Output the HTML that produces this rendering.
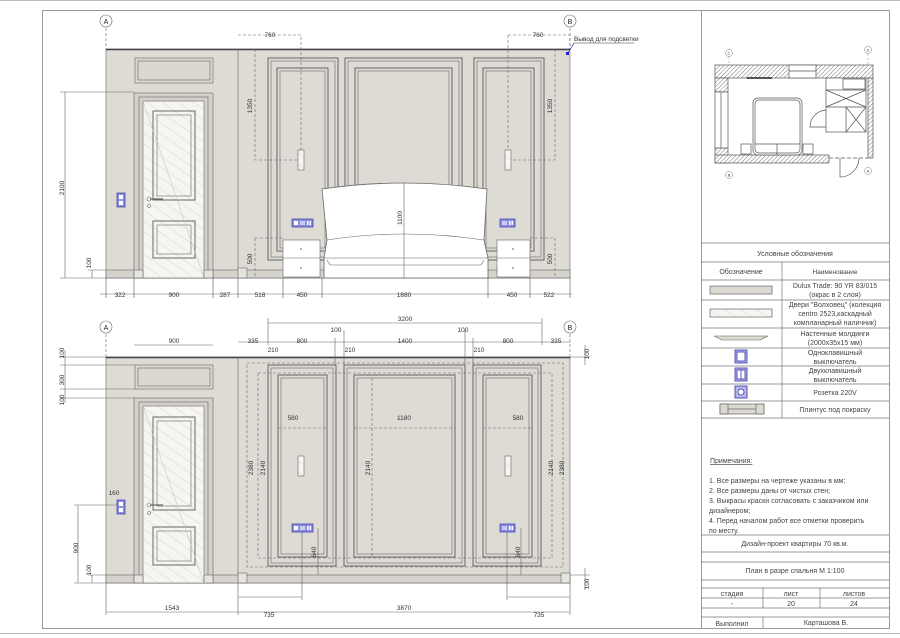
<!DOCTYPE html>
<html><head><meta charset="utf-8"><style>
html,body{margin:0;padding:0;background:#fff;}
svg{display:block;font-family:"Liberation Sans",sans-serif;}
</style></head><body>
<svg width="900" height="638" viewBox="0 0 900 638" xmlns="http://www.w3.org/2000/svg">
<defs>
<pattern id="h" width="3" height="3" patternUnits="userSpaceOnUse" patternTransform="rotate(45)"><rect width="3" height="3" fill="#fff"/><line x1="0" y1="0" x2="0" y2="3" stroke="#777" stroke-width="1"/></pattern>
<pattern id="dh" width="9" height="9" patternUnits="userSpaceOnUse" patternTransform="rotate(-55)"><rect width="9" height="9" fill="#f6f5f2"/><line x1="0" y1="0" x2="0" y2="9" stroke="#e2e0da" stroke-width="1.5"/></pattern>
<g id="sw2"><rect x="0" y="0" width="8" height="14" fill="#8e8fdf" stroke="#3333aa" stroke-width="0.7"/><rect x="2" y="2" width="4" height="4" fill="#fff"/><rect x="2" y="8" width="4" height="4" fill="#fff"/></g>
<g id="sk3"><rect x="0" y="0" width="21" height="8" fill="#8e8fdf" stroke="#3333aa" stroke-width="0.7"/><rect x="2" y="2" width="4" height="4" fill="#fff"/><rect x="8" y="2" width="5" height="4" fill="#c9caf2"/><rect x="15" y="2" width="1.5" height="4" fill="#fff"/><rect x="17.5" y="2" width="1.5" height="4" fill="#fff"/></g>
<g id="sk2"><rect x="0" y="0" width="15" height="8" fill="#8e8fdf" stroke="#3333aa" stroke-width="0.7"/><rect x="2" y="2" width="5" height="4" fill="#c9caf2"/><rect x="9" y="2" width="1.5" height="4" fill="#fff"/><rect x="11.5" y="2" width="1.5" height="4" fill="#fff"/></g>
</defs>
<rect width="900" height="638" fill="#fff"/>
<line x1="0" y1="0.5" x2="900" y2="0.5" stroke="#bbb"/>
<line x1="0" y1="633.5" x2="900" y2="633.5" stroke="#bbb"/>
<rect x="42.5" y="10.5" width="847" height="618" fill="none" stroke="#999"/>
<line x1="701.5" y1="10" x2="701.5" y2="628" stroke="#999"/>

<!-- ============ TOP ELEVATION ============ -->
<g stroke="#666" stroke-width="0.6" fill="none">
<rect x="106" y="49" width="464" height="229" fill="#dedbd5" stroke="#666"/>
<line x1="106" y1="49.5" x2="570" y2="49.5" stroke="#444" stroke-width="1.5"/>
<line x1="238" y1="49" x2="238" y2="278"/>
<rect x="106" y="270" width="464" height="8" fill="#d6d3cc"/>
<rect x="135" y="58" width="78" height="25" fill="#dbd8d1"/><rect x="138" y="61" width="72" height="19"/>
<rect x="134" y="93" width="79" height="185" fill="#d4d1ca"/>
<rect x="139" y="97" width="69" height="181"/>
<rect x="143" y="101" width="61" height="177" fill="url(#dh)"/>
<rect x="153" y="111" width="42" height="89" fill="url(#dh)" stroke-width="1"/><rect x="157" y="115" width="34" height="81"/>
<rect x="153" y="221" width="42" height="37" fill="url(#dh)" stroke-width="1"/><rect x="157" y="225" width="34" height="29"/>
<line x1="143" y1="101" x2="204" y2="278" stroke="#bbb" stroke-width="0.5"/>
<circle cx="149" cy="199" r="2"/><circle cx="149" cy="206" r="1.5"/><line x1="150" y1="199" x2="163" y2="199" stroke-width="1.2"/>
<rect x="134" y="270" width="9" height="8" fill="#e6e4df"/><rect x="204" y="270" width="9" height="8" fill="#e6e4df"/>
<rect x="238" y="268" width="9" height="10" fill="#e6e4df"/>
<rect x="268" y="58" width="70" height="202" stroke-width="1"/><rect x="271" y="61" width="64" height="196"/>
<rect x="277" y="68" width="51" height="183" stroke-width="1"/><rect x="280" y="71" width="45" height="177"/>
<rect x="345" y="58" width="117" height="202" stroke-width="1"/><rect x="348" y="61" width="111" height="196"/>
<rect x="355" y="68" width="97" height="183" stroke-width="1"/><rect x="358" y="71" width="91" height="177"/>
<rect x="474" y="58" width="70" height="202" stroke-width="1"/><rect x="477" y="61" width="64" height="196"/>
<rect x="483" y="68" width="51" height="183" stroke-width="1"/><rect x="486" y="71" width="45" height="177"/>
<!-- headboard -->
<path d="M322 189 Q404 177 487 189 L484 240 L488 258 L488 278 L324 278 L324 258 L327 240 Z" fill="#fff" stroke-width="0.8"/>
<path d="M327 240 Q404 228 484 240"/><line x1="324" y1="258" x2="488" y2="258"/><line x1="327" y1="260" x2="330" y2="265"/><line x1="484" y1="260" x2="481" y2="265"/><line x1="330" y1="265" x2="481" y2="265"/>
<rect x="283" y="240" width="37" height="37" fill="#fff"/><line x1="283" y1="258" x2="320" y2="258"/>
<rect x="497" y="240" width="33" height="37" fill="#fff"/><line x1="497" y1="258" x2="530" y2="258"/>
<rect x="298" y="150" width="6" height="20" fill="url(#dh)"/><rect x="505" y="150" width="6" height="20" fill="url(#dh)"/>
<g stroke-dasharray="3,2" stroke="#666">
<polyline points="238,35 301,35 301,150"/><polyline points="255,49 255,160 298,160"/>
<polyline points="508,35 570,35 570,49"/><line x1="508" y1="35" x2="508" y2="150"/><polyline points="555,49 555,160 511,160"/>
<polyline points="255,238 283,238"/><line x1="255" y1="238" x2="255" y2="278"/>
<polyline points="530,238 555,238 555,278"/>
<line x1="106" y1="28" x2="106" y2="49"/><line x1="570" y1="28" x2="570" y2="49"/>
</g>
</g>
<g fill="#555"><circle cx="301" cy="249" r="0.8"/><circle cx="301" cy="268" r="0.8"/><circle cx="513" cy="249" r="0.8"/><circle cx="513" cy="268" r="0.8"/></g>
<use href="#sw2" x="117" y="193"/><use href="#sk3" x="292" y="219"/><use href="#sk2" x="500" y="219"/>
<rect x="566" y="52" width="3" height="3" fill="#2222cc"/>
<line x1="568" y1="53" x2="574" y2="43" stroke="#2222cc" stroke-width="0.7"/><line x1="574" y1="43" x2="634" y2="43" stroke="#333" stroke-width="0.5"/>
<g font-size="6.5" fill="#333"><text x="574" y="41">Вывод для подсветки</text></g>
<g stroke="#666" stroke-width="0.6" fill="none">
<line x1="100" y1="294" x2="572" y2="294"/>
<line x1="65" y1="92" x2="65" y2="278"/><line x1="60" y1="92" x2="134" y2="92"/><line x1="60" y1="278" x2="106" y2="278"/>
<line x1="92" y1="270" x2="92" y2="278"/><line x1="88" y1="270" x2="106" y2="270"/>
<line x1="404" y1="183" x2="404" y2="278"/>
</g>
<g stroke="#555" stroke-width="0.6">
<line x1="106" y1="278" x2="106" y2="298"/><line x1="134" y1="278" x2="134" y2="298"/><line x1="213" y1="278" x2="213" y2="298"/><line x1="238" y1="278" x2="238" y2="298"/><line x1="283" y1="278" x2="283" y2="298"/><line x1="322" y1="278" x2="322" y2="298"/><line x1="488" y1="278" x2="488" y2="298"/><line x1="530" y1="278" x2="530" y2="298"/><line x1="570" y1="278" x2="570" y2="298"/>
</g>
<g font-size="6.5" fill="#333" text-anchor="middle">
<text x="120" y="297">322</text><text x="174" y="297">900</text><text x="225" y="297">287</text><text x="260" y="297">518</text><text x="302" y="297">450</text><text x="404" y="297">1880</text><text x="512" y="297">450</text><text x="549" y="297">522</text>
<text x="270" y="37">760</text><text x="538" y="37">760</text>
<text transform="translate(64,188) rotate(-90)">2100</text>
<text transform="translate(91,263) rotate(-90)">100</text>
<text transform="translate(252,106) rotate(-90)">1350</text>
<text transform="translate(552,106) rotate(-90)">1350</text>
<text transform="translate(252,259) rotate(-90)">500</text>
<text transform="translate(552,259) rotate(-90)">500</text>
<text transform="translate(402,218) rotate(-90)">1100</text>
</g>
<g fill="#fff" stroke="#666" stroke-width="0.6"><circle cx="106" cy="21" r="6"/><circle cx="570" cy="21" r="6"/><circle cx="106" cy="327" r="6"/><circle cx="570" cy="327" r="6"/></g>
<g font-size="7" fill="#222" text-anchor="middle"><text x="106" y="24">A</text><text x="570" y="24">B</text><text x="106" y="330">A</text><text x="570" y="330">B</text></g>

<!-- ============ BOTTOM ELEVATION ============ -->
<g stroke="#666" stroke-width="0.6" fill="none">
<rect x="106" y="357" width="464" height="226" fill="#dedbd5" stroke="#666"/>
<line x1="106" y1="357.5" x2="570" y2="357.5" stroke="#444" stroke-width="1.5"/>
<line x1="238" y1="357" x2="238" y2="583"/>
<rect x="106" y="575" width="464" height="8" fill="#d6d3cc"/>
<rect x="135" y="365" width="78" height="24" fill="#dbd8d1"/><rect x="138" y="368" width="72" height="18"/>
<rect x="134" y="398" width="79" height="185" fill="#d4d1ca"/>
<rect x="139" y="402" width="69" height="181"/>
<rect x="143" y="406" width="61" height="177" fill="url(#dh)"/>
<rect x="153" y="417" width="42" height="93" fill="url(#dh)" stroke-width="1"/><rect x="157" y="421" width="34" height="85"/>
<rect x="153" y="527" width="42" height="38" fill="url(#dh)" stroke-width="1"/><rect x="157" y="531" width="34" height="30"/>
<line x1="143" y1="406" x2="204" y2="583" stroke="#bbb" stroke-width="0.5"/>
<circle cx="149" cy="505" r="2"/><circle cx="149" cy="513" r="1.5"/><line x1="150" y1="505" x2="163" y2="505" stroke-width="1.2"/>
<rect x="134" y="575" width="9" height="8" fill="#e6e4df"/><rect x="204" y="575" width="9" height="8" fill="#e6e4df"/>
<rect x="238" y="573" width="9" height="10" fill="#e6e4df"/><rect x="561" y="573" width="9" height="10" fill="#e6e4df"/>
<rect x="268" y="365" width="68" height="201" stroke-width="1"/><rect x="271" y="368" width="62" height="195"/>
<rect x="278" y="375" width="49" height="182" stroke-width="1"/><rect x="281" y="378" width="43" height="176"/>
<rect x="344" y="365" width="121" height="201" stroke-width="1"/><rect x="347" y="368" width="115" height="195"/>
<rect x="354" y="375" width="101" height="182" stroke-width="1"/><rect x="357" y="378" width="95" height="176"/>
<rect x="473" y="365" width="68" height="201" stroke-width="1"/><rect x="476" y="368" width="62" height="195"/>
<rect x="483" y="375" width="49" height="182" stroke-width="1"/><rect x="486" y="378" width="43" height="176"/>
<rect x="298" y="456" width="6" height="20" fill="url(#dh)"/><rect x="505" y="456" width="6" height="20" fill="url(#dh)"/>
<g stroke-dasharray="3,2" stroke="#666">
<rect x="247" y="363" width="316" height="204"/><rect x="258" y="373" width="294" height="185"/>
<line x1="278" y1="428" x2="327" y2="428"/><line x1="354" y1="428" x2="455" y2="428"/><line x1="483" y1="428" x2="532" y2="428"/>
<line x1="372" y1="378" x2="372" y2="557"/>
<line x1="106" y1="334" x2="106" y2="357"/><line x1="570" y1="334" x2="570" y2="357"/>
</g>
</g>
<use href="#sw2" x="117" y="500"/><use href="#sk3" x="292" y="524"/><use href="#sk2" x="500" y="524"/>
<g stroke="#666" stroke-width="0.6" fill="none">
<line x1="268" y1="323" x2="542" y2="323"/>
<line x1="238" y1="342" x2="570" y2="342"/>
<line x1="134" y1="345" x2="213" y2="345"/>
<line x1="65" y1="350" x2="65" y2="403"/><line x1="60" y1="357" x2="106" y2="357"/><line x1="60" y1="365" x2="135" y2="365"/><line x1="60" y1="389" x2="135" y2="389"/><line x1="60" y1="398" x2="135" y2="398"/>
<line x1="78" y1="505" x2="78" y2="583"/><line x1="74" y1="505" x2="117" y2="505"/><line x1="74" y1="583" x2="106" y2="583"/>
<line x1="92" y1="575" x2="92" y2="583"/><line x1="88" y1="575" x2="106" y2="575"/>
<line x1="238" y1="597" x2="302" y2="597"/><line x1="507" y1="597" x2="570" y2="597"/>
<line x1="106" y1="612" x2="570" y2="612"/>
<line x1="106" y1="583" x2="106" y2="615"/><line x1="238" y1="583" x2="238" y2="615"/><line x1="570" y1="583" x2="570" y2="615"/>
<line x1="302" y1="532" x2="302" y2="600"/><line x1="507" y1="532" x2="507" y2="600"/>
<line x1="318" y1="528" x2="318" y2="575"/><line x1="521" y1="528" x2="521" y2="575"/>
<line x1="585" y1="345" x2="585" y2="365"/><line x1="570" y1="357" x2="590" y2="357"/><line x1="570" y1="575" x2="590" y2="575"/><line x1="585" y1="568" x2="585" y2="590"/>
<line x1="268" y1="318" x2="268" y2="345"/><line x1="542" y1="318" x2="542" y2="345"/>
<line x1="335" y1="338" x2="335" y2="365"/><line x1="344" y1="330" x2="344" y2="365"/><line x1="465" y1="330" x2="465" y2="365"/><line x1="473" y1="338" x2="473" y2="365"/>
</g>
<g font-size="6.5" fill="#333" text-anchor="middle">
<text x="405" y="321">3200</text><text x="336" y="332">100</text><text x="463" y="332">100</text>
<text x="253" y="343">335</text><text x="302" y="343">800</text><text x="405" y="343">1400</text><text x="508" y="343">800</text><text x="556" y="343">335</text>
<text x="174" y="343">900</text>
<text x="273" y="352">210</text><text x="350" y="352">210</text><text x="479" y="352">210</text>
<text x="293" y="420">580</text><text x="404" y="420">1180</text><text x="518" y="420">580</text>
<text x="269" y="617">735</text><text x="539" y="617">735</text><text x="172" y="610">1543</text><text x="404" y="610">3870</text>
<text x="114" y="495">160</text>
<text transform="translate(64,353) rotate(-90)">100</text>
<text transform="translate(64,380) rotate(-90)">300</text>
<text transform="translate(64,400) rotate(-90)">100</text>
<text transform="translate(78,548) rotate(-90)">900</text>
<text transform="translate(91,570) rotate(-90)">100</text>
<text transform="translate(253,468) rotate(-90)">2380</text>
<text transform="translate(265,468) rotate(-90)">2140</text>
<text transform="translate(370,468) rotate(-90)">2140</text>
<text transform="translate(553,468) rotate(-90)">2140</text>
<text transform="translate(564,468) rotate(-90)">2380</text>
<text transform="translate(316,552) rotate(-90)">640</text>
<text transform="translate(520,552) rotate(-90)">640</text>
<text transform="translate(589,354) rotate(-90)">100</text>
<text transform="translate(589,584) rotate(-90)">100</text>
</g>

<!-- ============ PLAN ============ -->
<g stroke="#555" stroke-width="0.7">
<rect x="715" y="65" width="158" height="13" fill="url(#h)"/>
<rect x="789" y="65" width="27" height="13" fill="#fff"/><line x1="789" y1="71" x2="816" y2="71"/>
<rect x="715" y="78" width="13" height="14" fill="url(#h)"/>
<rect x="715" y="148" width="13" height="15" fill="url(#h)"/>
<rect x="715" y="92" width="13" height="56" fill="#fff"/><line x1="721" y1="92" x2="721" y2="148"/>
<rect x="715" y="155" width="114" height="8" fill="url(#h)"/>
<rect x="868" y="78" width="5" height="80" fill="url(#h)"/>
<line x1="829" y1="158" x2="868" y2="158" stroke-dasharray="4,2"/>
<path d="M840 158 L840 177 A19 19 0 0 0 859 158" fill="none"/>
<rect x="753" y="98" width="49" height="57" rx="5" fill="#fff"/><rect x="755" y="100" width="45" height="53" rx="4" fill="none"/>
<line x1="755" y1="144" x2="800" y2="144"/><line x1="777" y1="144" x2="777" y2="155"/>
<rect x="741" y="144" width="10" height="10" fill="#fff"/><rect x="803" y="144" width="10" height="10" fill="#fff"/>
<line x1="747" y1="78" x2="772" y2="78" stroke-width="2"/>
<rect x="826" y="78" width="40" height="54" fill="#fff"/>
<line x1="826" y1="90" x2="866" y2="90"/><line x1="826" y1="107" x2="866" y2="107"/><line x1="846" y1="107" x2="846" y2="132"/>
<line x1="826" y1="90" x2="866" y2="107"/><line x1="866" y1="90" x2="826" y2="107"/>
<line x1="846" y1="107" x2="866" y2="132"/><line x1="866" y1="107" x2="846" y2="132"/>
<rect x="843" y="79" width="22" height="10" fill="none"/>
<path d="M826 110 A17 17 0 0 0 810 127 L826 127" fill="none"/>
</g>
<g fill="#fff" stroke="#777" stroke-width="0.5"><circle cx="729" cy="53" r="3.5"/><circle cx="868" cy="50" r="3.5"/><circle cx="729" cy="175" r="3.5"/><circle cx="868" cy="171" r="3.5"/></g>
<g font-size="4" fill="#333" text-anchor="middle"><text x="729" y="54.5">C</text><text x="868" y="51.5">D</text><text x="729" y="176.5">B</text><text x="868" y="172.5">A</text></g>
<g stroke="#888" stroke-width="0.5" stroke-dasharray="2,2"><line x1="729" y1="57" x2="729" y2="65"/><line x1="868" y1="54" x2="868" y2="65"/></g>

<!-- ============ LEGEND ============ -->
<g stroke="#777" stroke-width="0.7" fill="none">
<line x1="701" y1="243" x2="889" y2="243"/>
<line x1="701" y1="262" x2="889" y2="262"/>
<line x1="701" y1="280" x2="889" y2="280"/>
<line x1="701" y1="300" x2="889" y2="300"/>
<line x1="701" y1="328" x2="889" y2="328"/>
<line x1="701" y1="348" x2="889" y2="348"/>
<line x1="701" y1="366" x2="889" y2="366"/>
<line x1="701" y1="384" x2="889" y2="384"/>
<line x1="701" y1="401" x2="889" y2="401"/>
<line x1="701" y1="418" x2="889" y2="418"/>
<line x1="782" y1="262" x2="782" y2="418"/>
<line x1="701" y1="535" x2="889" y2="535"/>
<line x1="701" y1="552" x2="889" y2="552"/>
<line x1="701" y1="562" x2="889" y2="562"/>
<line x1="701" y1="580" x2="889" y2="580"/>
<line x1="701" y1="588" x2="889" y2="588"/>
<line x1="701" y1="598" x2="889" y2="598"/>
<line x1="701" y1="608" x2="889" y2="608"/>
<line x1="701" y1="617" x2="889" y2="617"/>
<line x1="763" y1="588" x2="763" y2="608"/><line x1="820" y1="588" x2="820" y2="608"/>
<line x1="763" y1="617" x2="763" y2="628"/>
</g>
<rect x="710" y="286" width="62" height="8" fill="#dcd9d2" stroke="#666" stroke-width="0.7"/>
<rect x="710" y="309" width="62" height="8" fill="url(#dh)" stroke="#666" stroke-width="0.7"/>
<path d="M714 336 L768 336 L760 340 L722 340 Z" fill="#dcd9d2" stroke="#666" stroke-width="0.6"/>
<g stroke="#3333aa" stroke-width="0.8" fill="#b7b8ea"><rect x="735" y="350" width="12" height="13"/><rect x="735" y="368" width="12" height="13"/><rect x="735" y="386" width="12" height="12"/></g>
<g stroke="#3333aa" stroke-width="0.8" fill="#fff"><rect x="737" y="352" width="8" height="9"/><rect x="737" y="370" width="8" height="9"/><circle cx="741" cy="392" r="3"/></g>
<line x1="741" y1="370" x2="741" y2="379" stroke="#3333aa" stroke-width="0.8"/>
<g stroke="#666" stroke-width="0.7" fill="#dcd9d2"><rect x="720" y="404" width="44" height="10"/><rect x="720" y="404" width="8" height="10"/><rect x="756" y="404" width="8" height="10"/></g>
<line x1="728" y1="409" x2="756" y2="409" stroke="#666" stroke-width="0.7"/>

<g font-size="7" fill="#444" text-anchor="middle">
<text x="795" y="256">Условные обозначения</text>
<text x="741" y="274">Обозначение</text>
<text x="835" y="274" font-size="6.5">Наименование</text>
<text x="835" y="288">Dulux Trade: 90 YR 83/015</text>
<text x="835" y="297">(окрас в 2 слоя)</text>
<text x="835" y="307">Двери "Волховец" (колекция</text>
<text x="835" y="316">centro 2523,каскадный</text>
<text x="835" y="325">компланарный наличник)</text>
<text x="835" y="336">Настенные молдинги</text>
<text x="835" y="345">(2000x35x15 мм)</text>
<text x="835" y="355">Одноклавишный</text>
<text x="835" y="364">выключатель</text>
<text x="835" y="373">Двухклавишный</text>
<text x="835" y="382">выключатель</text>
<text x="835" y="395">Розетка 220V</text>
<text x="835" y="412">Плинтус под покраску</text>
<text x="795" y="546">Дизайн-проект квартиры 70 кв.м.</text>
<text x="795" y="573">План в разре спальня М 1:100</text>
<text x="732" y="596">стадия</text><text x="791" y="596">лист</text><text x="854" y="596">листов</text>
<text x="732" y="606">-</text><text x="791" y="606">20</text><text x="854" y="606">24</text>
<text x="732" y="626">Выполнил</text><text x="826" y="625">Карташова В.</text>
</g>
<g font-size="7" fill="#444">
<text x="710" y="463" text-decoration="underline">Примечания:</text>
<text x="709" y="483">1. Все размеры на чертеже указаны в мм;</text>
<text x="709" y="493">2. Все размеры даны от чистых стен;</text>
<text x="709" y="503">3. Выкрасы краски согласовать с заказчиком или</text>
<text x="709" y="513">дизайнером;</text>
<text x="709" y="523">4. Перед началом работ все отметки проверить</text>
<text x="709" y="533">по месту.</text>
</g>
</svg>
</body></html>
